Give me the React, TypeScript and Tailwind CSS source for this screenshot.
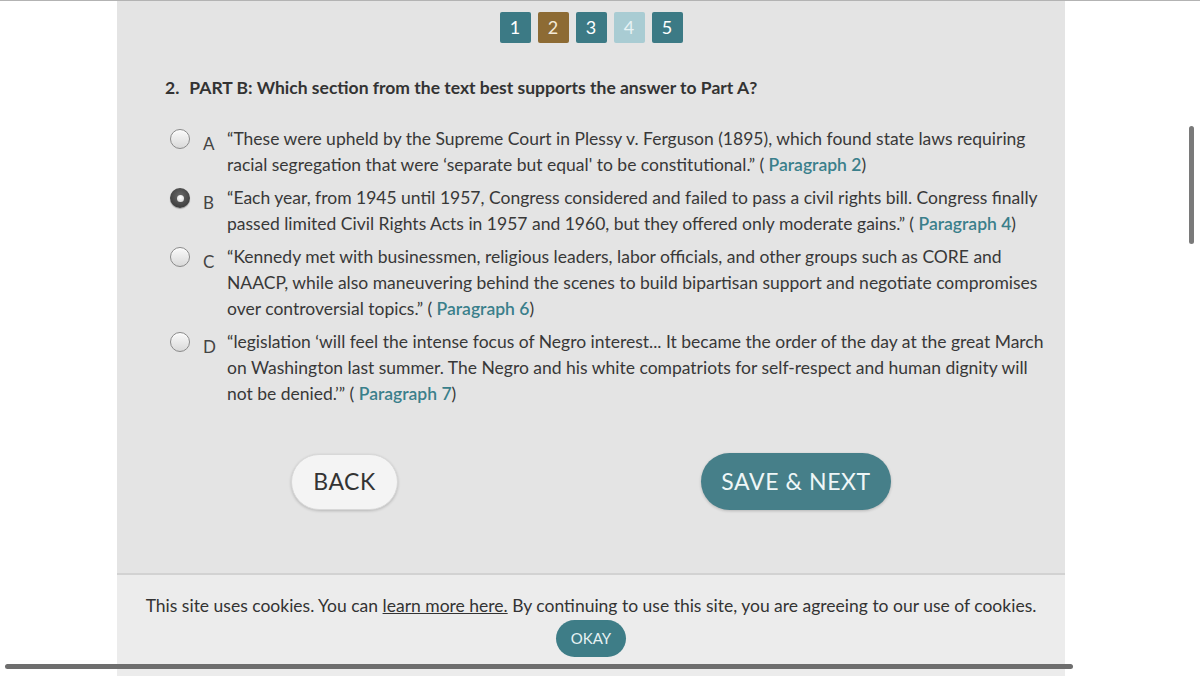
import { FC } from "react";

type Option = {
  letter: string;
  text: string;
  paragraph: number;
  selected?: boolean;
};

const options: Option[] = [
  {
    letter: "A",
    text: "“These were upheld by the Supreme Court in Plessy v. Ferguson (1895), which found state laws requiring racial segregation that were ‘separate but equal' to be constitutional.” (",
    paragraph: 2,
  },
  {
    letter: "B",
    text: "“Each year, from 1945 until 1957, Congress considered and failed to pass a civil rights bill. Congress finally passed limited Civil Rights Acts in 1957 and 1960, but they offered only moderate gains.” (",
    paragraph: 4,
    selected: true,
  },
  {
    letter: "C",
    text: "“Kennedy met with businessmen, religious leaders, labor officials, and other groups such as CORE and NAACP, while also maneuvering behind the scenes to build bipartisan support and negotiate compromises over controversial topics.” (",
    paragraph: 6,
  },
  {
    letter: "D",
    text: "“legislation ‘will feel the intense focus of Negro interest... It became the order of the day at the great March on Washington last summer. The Negro and his white compatriots for self-respect and human dignity will not be denied.’” (",
    paragraph: 7,
  },
];

const pages = [
  { n: 1, cls: "bg-[#3c7a85] text-white" },
  { n: 2, cls: "bg-[#8d6b34] text-[#f3ead8]" },
  { n: 3, cls: "bg-[#3c7a85] text-white" },
  { n: 4, cls: "bg-[#a9ccd3] text-[#e8f3f5]" },
  { n: 5, cls: "bg-[#3c7a85] text-white" },
];

const Radio: FC<{ checked?: boolean }> = ({ checked }) =>
  checked ? (
    <span className="flex h-[20px] w-[20px] shrink-0 items-center justify-center rounded-full bg-[radial-gradient(circle_at_50%_40%,#6a6a6a,#2e2e2e)] shadow-[0_1px_1px_rgba(0,0,0,0.3)]">
      <span className="block h-[7px] w-[7px] rounded-full bg-[radial-gradient(circle_at_50%_35%,#ffffff,#cfcfcf)]" />
    </span>
  ) : (
    <span className="block h-[20px] w-[20px] shrink-0 rounded-full border border-[#8a8a8a] bg-[linear-gradient(180deg,#fafafa,#d9d9d9)] shadow-[inset_0_1px_1px_rgba(255,255,255,0.8)]" />
  );

const App: FC = () => {
  return (
    <div className="relative h-[676px] w-full overflow-hidden border-t border-[#b3b3b3] bg-white font-['Lato','Liberation_Sans',sans-serif] text-[#383838]">
      <main className="ml-[117px] flex h-full w-[948px] flex-col bg-[#e4e4e4]">
        <nav className="mt-[11px] flex justify-center gap-[7px]">
          {pages.map((p) => (
            <span
              key={p.n}
              className={`flex h-[31px] w-[31px] items-center justify-center rounded-[2px] text-[18px] ${p.cls}`}
            >
              {p.n}
            </span>
          ))}
        </nav>

        <h2 className="mt-[33px] pl-[48px] text-[17.5px] leading-[24px] font-bold text-[#333]">
          2.<span className="ml-[10px]">PART B: Which section from the text best supports the answer to Part A?</span>
        </h2>

        <ul className="mt-[26px] flex flex-col gap-[7px] pl-[53px]">
          {options.map((o) => (
            <li key={o.letter} className="flex items-start">
              <span className="mt-[3px] block">
                <Radio checked={o.selected} />
              </span>
              <span className="mt-[5px] ml-[13px] w-[24px] shrink-0 text-[17px] leading-[26px] text-[#444]">
                {o.letter}
              </span>
              <p className="w-[822px] text-[17.5px] leading-[26px]">
                {o.text} <span className="font-semibold text-[#3a7f8b]">Paragraph {o.paragraph}</span>)
              </p>
            </li>
          ))}
        </ul>

        <div className="mt-[46px] flex items-center pl-[174px]">
          <button className="flex h-[56px] w-[107px] items-center justify-center rounded-full border border-[#d8d8d8] bg-[#f4f4f4] text-[23px] tracking-[0.5px] text-[#333] shadow-[0_1px_3px_rgba(0,0,0,0.2)]">
            BACK
          </button>
          <button className="ml-[303px] flex h-[57px] w-[190px] items-center justify-center rounded-full bg-[#467f89] text-[23px] tracking-[0.6px] text-[#eef6f7] shadow-[0_1px_3px_rgba(0,0,0,0.2)]">
            SAVE &amp; NEXT
          </button>
        </div>

        <footer className="mt-auto flex h-[103px] flex-col items-center border-t-2 border-[#d2d2d2] bg-[#ececec] pt-[19px]">
          <p className="text-[17.5px] leading-[24px] text-[#333]">
            This site uses cookies. You can <span className="underline">learn more here.</span> By continuing to use this site, you are agreeing to our use of cookies.
          </p>
          <button className="mt-[2px] flex h-[37px] w-[70px] items-center justify-center rounded-full bg-[#3e7d87] text-[15px] text-[#e6f2f3]">
            OKAY
          </button>
        </footer>
      </main>

      <div className="absolute top-[663px] left-[5px] h-[5px] w-[1068px] rounded-full bg-[#6e6e6e]" />
      <div className="absolute top-[125px] left-[1189px] h-[118px] w-[5px] rounded-full bg-[#7a7a7a]" />
    </div>
  );
};

export default App;
